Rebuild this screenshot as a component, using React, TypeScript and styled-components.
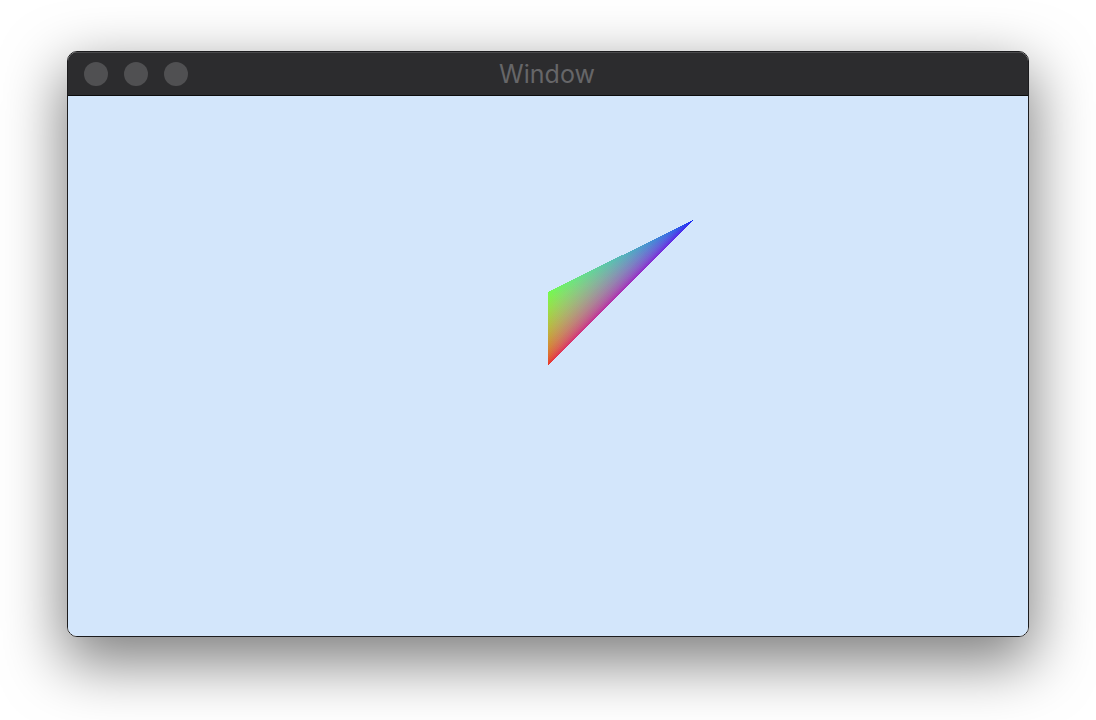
import React from "react";
import styled, { createGlobalStyle } from "styled-components";

const Global = createGlobalStyle`
  html, body { margin: 0; padding: 0; background: #ffffff; }
  body { font-family: Inter, "Liberation Sans", sans-serif; }
`;

const Page = styled.div`
  width: 1096px;
  height: 720px;
  box-sizing: border-box;
  padding: 51px 0 0 67px;
  overflow: hidden;
  background: #ffffff;
`;

const Window = styled.div`
  width: 962px;
  height: 586px;
  box-sizing: border-box;
  border: 1px solid #1c1c1e;
  border-radius: 10px;
  overflow: hidden;
  display: flex;
  flex-direction: column;
  box-shadow: 0 22px 60px 4px rgba(0, 0, 0, 0.5);
`;

const TitleBar = styled.div`
  position: relative;
  height: 44px;
  box-sizing: border-box;
  flex: none;
  background: #2c2c2e;
  border-top: 1px solid #4a4a4c;
  border-bottom: 1px solid #0c0c0c;
  display: flex;
  align-items: center;
  justify-content: center;
`;

const Lights = styled.div`
  position: absolute;
  left: 16px;
  top: 9px;
  display: flex;
  gap: 16px;
`;

const Light = styled.span`
  width: 24px;
  height: 24px;
  border-radius: 50%;
  background: #505052;
`;

const Title = styled.div`
  font-family: Inter, "Liberation Sans", sans-serif;
  font-size: 25px;
  color: #666668;
  line-height: 1;
  margin-top: 1px;
  margin-left: -2px;
`;

const Content = styled.div`
  flex: 1;
  background: #d3e6fb;
  position: relative;
`;

const Canvas = styled.svg`
  display: block;
  width: 960px;
  height: 540px;
`;

const R = { x: 480, y: 269 };
const G = { x: 480, y: 196 };
const B = { x: 625, y: 124 };

function foot(p: { x: number; y: number }, a: { x: number; y: number }, b: { x: number; y: number }) {
  const dx = b.x - a.x;
  const dy = b.y - a.y;
  const t = ((p.x - a.x) * dx + (p.y - a.y) * dy) / (dx * dx + dy * dy);
  return { x: a.x + t * dx, y: a.y + t * dy };
}

const pts = `${R.x},${R.y} ${G.x},${G.y} ${B.x},${B.y}`;

// Stop colours are the linear-light values of the vertex colours; the group's
// filter re-encodes the additive mix to sRGB, so the blend happens in linear light.
function Triangle() {
  const fr = foot(R, G, B);
  const fg = foot(G, R, B);
  const fb = foot(B, R, G);
  return (
    <Canvas viewBox="0 0 960 540">
      <defs>
        <linearGradient id="gr" gradientUnits="userSpaceOnUse" x1={R.x} y1={R.y} x2={fr.x} y2={fr.y}>
          <stop offset="0" stopColor="rgb(210,8,4)" />
          <stop offset="1" stopColor="#000000" />
        </linearGradient>
        <linearGradient id="gg" gradientUnits="userSpaceOnUse" x1={G.x} y1={G.y} x2={fg.x} y2={fg.y}>
          <stop offset="0" stopColor="rgb(45,246,18)" />
          <stop offset="1" stopColor="#000000" />
        </linearGradient>
        <linearGradient id="gb" gradientUnits="userSpaceOnUse" x1={B.x} y1={B.y} x2={fb.x} y2={fb.y}>
          <stop offset="0" stopColor="rgb(0,4,233)" />
          <stop offset="1" stopColor="#000000" />
        </linearGradient>
        <filter id="encode" colorInterpolationFilters="sRGB" x="-10%" y="-10%" width="120%" height="120%">
          <feComponentTransfer>
            <feFuncR type="gamma" amplitude="1" exponent="0.4545" offset="0" />
            <feFuncG type="gamma" amplitude="1" exponent="0.4545" offset="0" />
            <feFuncB type="gamma" amplitude="1" exponent="0.4545" offset="0" />
          </feComponentTransfer>
        </filter>
      </defs>
      <g style={{ isolation: "isolate" }} filter="url(#encode)" shapeRendering="crispEdges">
        <polygon points={pts} fill="url(#gr)" />
        <polygon points={pts} fill="url(#gg)" style={{ mixBlendMode: "plus-lighter" as any }} />
        <polygon points={pts} fill="url(#gb)" style={{ mixBlendMode: "plus-lighter" as any }} />
      </g>
    </Canvas>
  );
}

export default function App() {
  return (
    <Page>
      <Global />
      <Window>
        <TitleBar>
          <Lights>
            <Light />
            <Light />
            <Light />
          </Lights>
          <Title>Window</Title>
        </TitleBar>
        <Content>
          <Triangle />
        </Content>
      </Window>
    </Page>
  );
}
